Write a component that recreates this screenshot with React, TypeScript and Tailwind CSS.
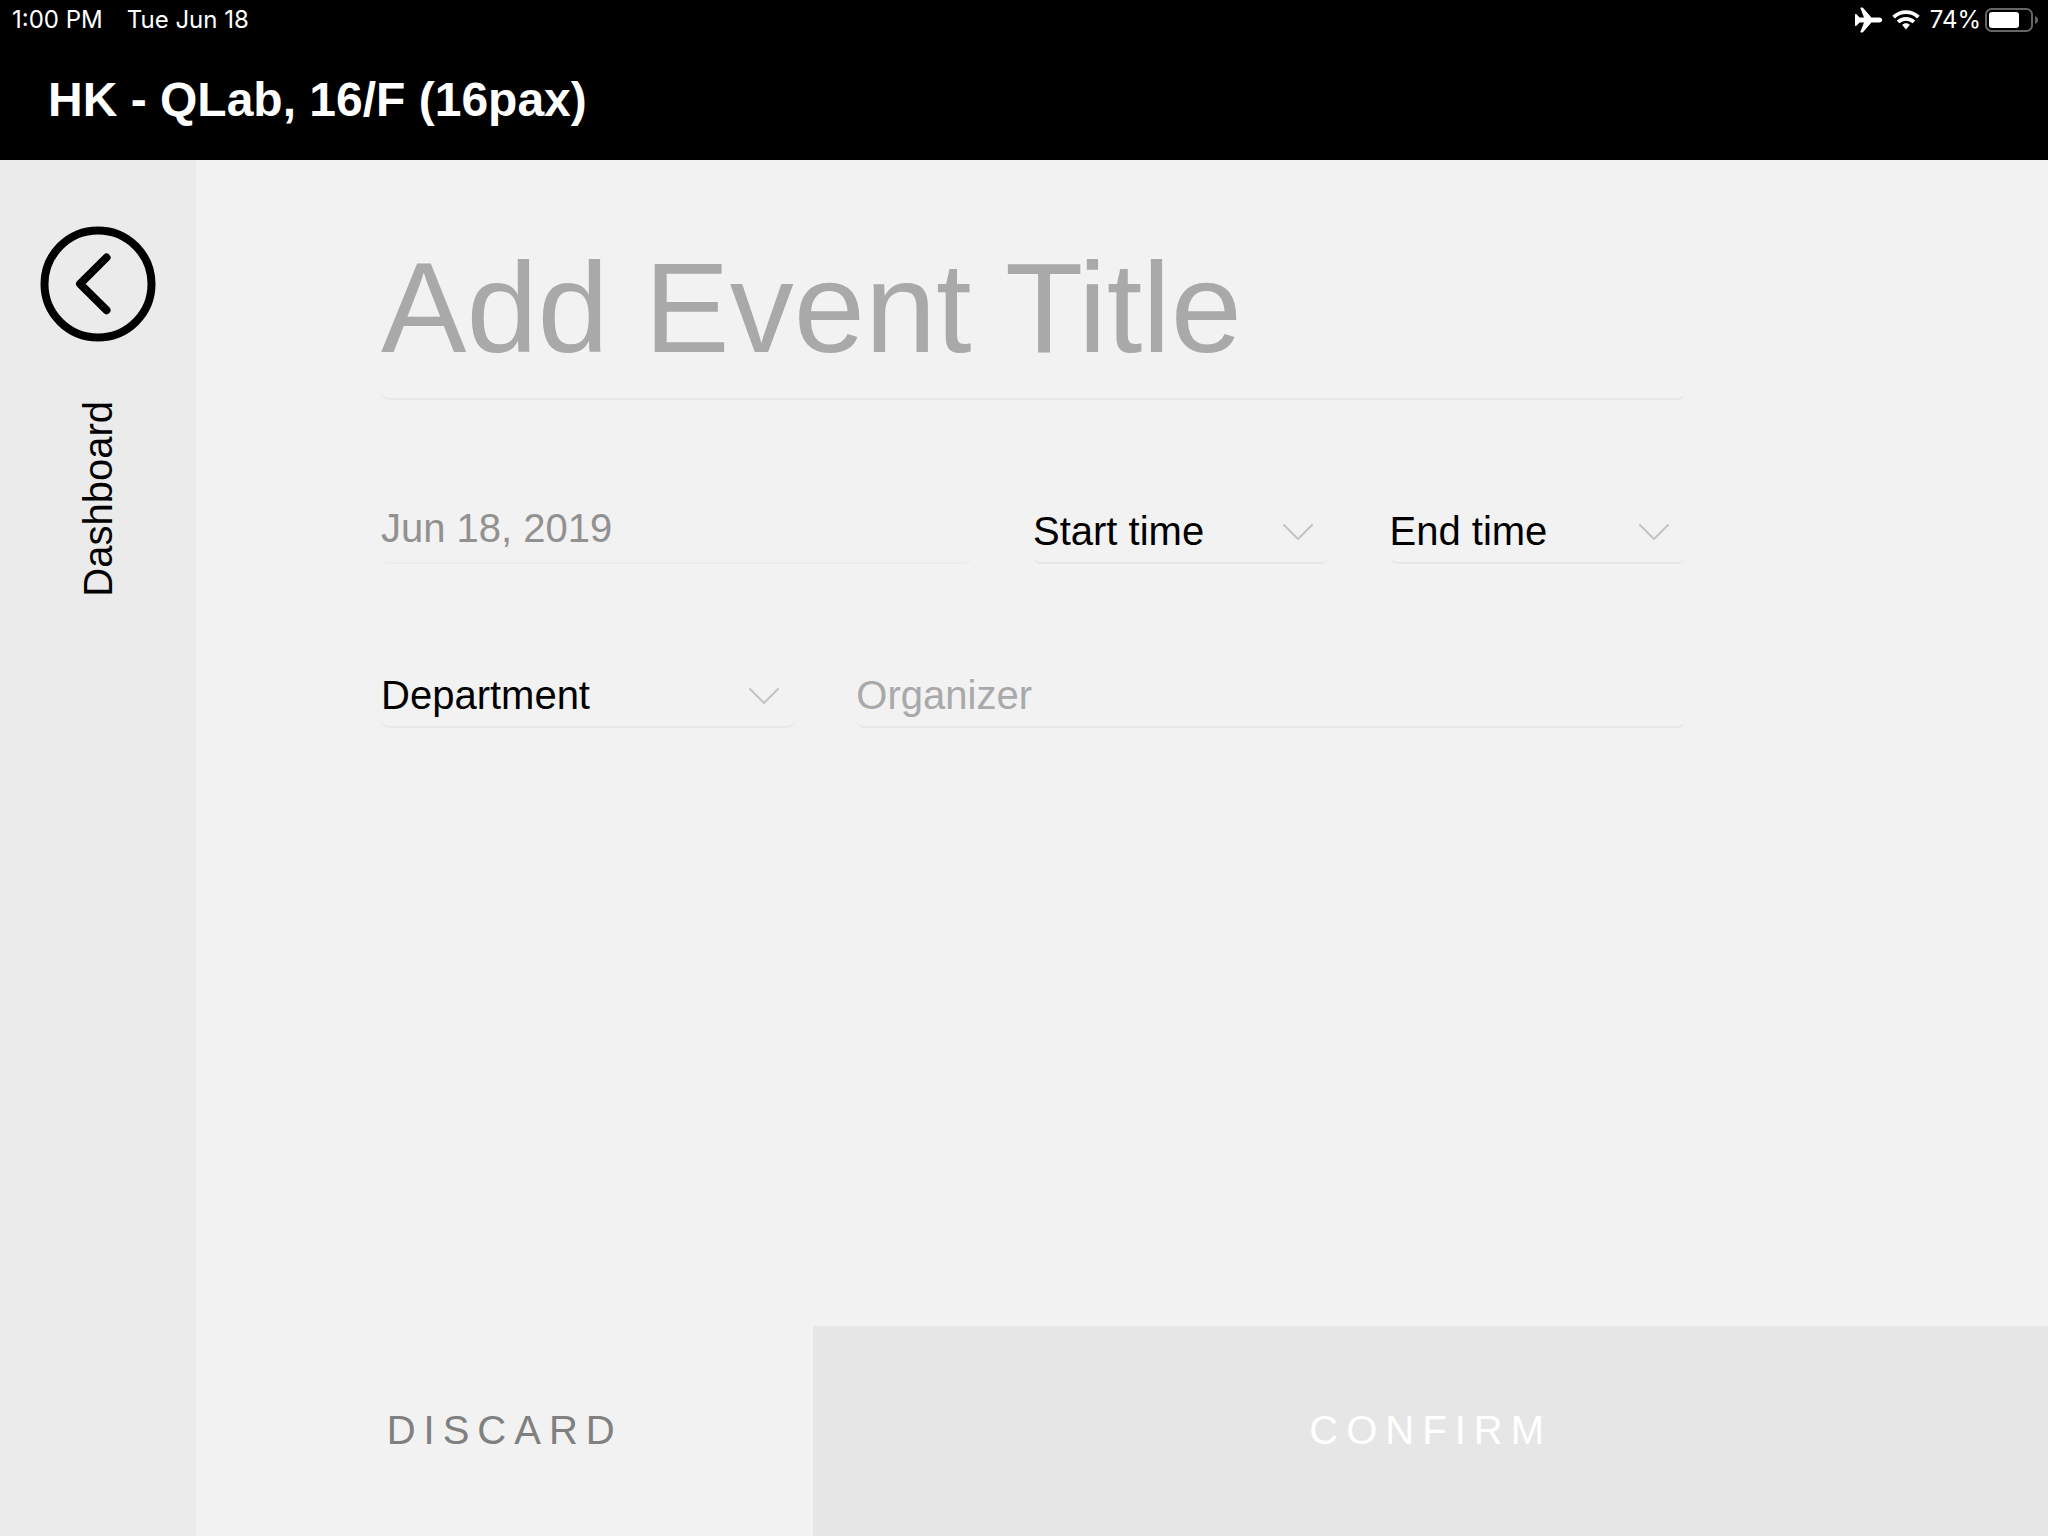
import React from "react";

function AirplaneIcon() {
  return (
    <svg viewBox="0 0 28 26" className="h-[26px] w-[28px]" fill="currentColor" aria-hidden="true">
      <path d="M6 .6h1.200c.5 0 .9.2 1.200.6l8 9.400h7.800c1.800 0 3 1 3 2.400s-1.200 2.400-3 2.400h-7.800l-8 9.400c-.3.4-.7.6-1.200.6H6c-.5 0-.7-.4-.5-.9l3.500-9.100H4.600L1.700 18.500c-.2.300-.5.400-.8.400H.6c-.4 0-.6-.2-.6-.6V7.700c0-.4.2-.6.6-.6h.3c.3 0 .6.1.8.4l2.900 3.100H9L5.500 1.500C5.300 1 5.500.6 6 .6z" />
    </svg>
  );
}

function WifiIcon() {
  return (
    <svg viewBox="0 0 28 20" className="h-[20px] w-[28px]" fill="none" stroke="currentColor" strokeWidth="3.800" aria-hidden="true">
      <path d="M1.600 7.200a17.800 17.800 0 0 1 24.800 0" />
      <path d="M6.100 12a11.300 11.300 0 0 1 15.800 0" />
      <path d="M14 13.300c-1.500 0-2.900.6-3.900 1.500L14 19.600l3.900-4.800c-1-.9-2.400-1.500-3.900-1.500z" fill="currentColor" stroke="none" />
    </svg>
  );
}

function BatteryIcon() {
  return (
    <svg viewBox="0 0 54 24" className="h-[24px] w-[54px]" aria-hidden="true">
      <rect x="1" y="1" width="46" height="22" rx="5.500" fill="none" stroke="#666" strokeWidth="2" />
      <rect x="4" y="4" width="30" height="16" rx="3" fill="#fff" />
      <path d="M50 8c2 .7 3 2.200 3 4s-1 3.300-3 4z" fill="#666" />
    </svg>
  );
}

function StatusBar() {
  return (
    <div className="flex h-10 items-center justify-between pl-3 pr-[9px] font-[Inter,sans-serif] text-2xl">
      <div className="flex gap-6">
        <span>1:00 PM</span>
        <span>Tue Jun 18</span>
      </div>
      <div className="flex items-center">
        <AirplaneIcon />
        <span className="ml-[9px]">
          <WifiIcon />
        </span>
        <span className="ml-2.5 mr-1">74%</span>
        <BatteryIcon />
      </div>
    </div>
  );
}

function SelectField({ id, label }: { id: string; label: string }) {
  return (
    <div className="relative h-16">
      <select
        id={id}
        aria-label={label}
        className="h-full w-full appearance-none rounded-lg border-b-2 border-[#e6e6e6] bg-transparent pr-14 text-[40px] text-black outline-none"
      >
        <option>{label}</option>
      </select>
      <svg
        viewBox="0 0 30 16"
        className="pointer-events-none absolute right-4 top-6 h-4 w-[30px]"
        fill="none"
        stroke="#c4c4c4"
        strokeWidth="2"
        strokeLinecap="round"
        strokeLinejoin="round"
        aria-hidden="true"
      >
        <path d="M1 1l14 14L29 1" />
      </svg>
    </div>
  );
}

export default function App() {
  return (
    <div className="flex min-h-screen flex-col bg-[#f2f2f2] font-['Liberation_Sans',Arial,sans-serif]">
      <header className="h-40 bg-black text-white">
        <StatusBar />
        <h1 className="pl-12 pt-8 text-5xl leading-14 font-bold">HK - QLab, 16/F (16pax)</h1>
      </header>

      <div className="flex grow">
        <aside className="w-49 shrink-0 bg-[#ebebeb] pt-[66px]">
          <a href="#dashboard" className="flex flex-col items-center gap-[59px] text-[40px] leading-12 text-black">
            <svg viewBox="0 0 116 116" className="size-[116px]" fill="none" stroke="currentColor" strokeWidth="8" aria-hidden="true">
              <circle cx="58" cy="58" r="53.500" />
              <path d="M66.500 31.500L40 57.800l26.500 26.400" strokeLinecap="round" strokeLinejoin="round" />
            </svg>
            <span className="rotate-180 [writing-mode:vertical-rl]">Dashboard</span>
          </a>
        </aside>

        <main className="flex grow flex-col">
          <form className="flex grow flex-col gap-[100px] pl-[185px] pr-[363px] pt-[57px]">
            <input
              type="text"
              aria-label="Event title"
              placeholder="Add Event Title"
              className="h-[183px] w-full rounded-lg border-b-2 border-[#e6e6e6] bg-transparent text-[128px] text-black outline-none placeholder:text-[#a9a9a9]"
            />
            <div className="grid grid-cols-[2fr_1fr_1fr] gap-[61px]">
              <input
                type="text"
                aria-label="Date"
                defaultValue="Jun 18, 2019"
                readOnly
                className="h-16 w-full rounded-lg border-b-2 border-[#ececec] bg-transparent pb-1.5 text-[40px] text-[#919191] outline-none"
              />
              <SelectField id="start-time" label="Start time" />
              <SelectField id="end-time" label="End time" />
            </div>
            <div className="grid grid-cols-[1fr_2fr] gap-[61px]">
              <SelectField id="department" label="Department" />
              <input
                type="text"
                aria-label="Organizer"
                placeholder="Organizer"
                className="h-16 w-full rounded-lg border-b-2 border-[#e6e6e6] bg-transparent text-[40px] text-black outline-none placeholder:text-[#a9a9a9]"
              />
            </div>
          </form>
          <div className="grid h-[210px] grid-cols-[1fr_2fr] text-[40px] tracking-[8px]">
            <button type="button" className="pb-0.5 text-[#808080]">
              DISCARD
            </button>
            <button type="button" className="bg-[#e6e6e6] pb-0.5 text-white">
              CONFIRM
            </button>
          </div>
        </main>
      </div>
    </div>
  );
}
